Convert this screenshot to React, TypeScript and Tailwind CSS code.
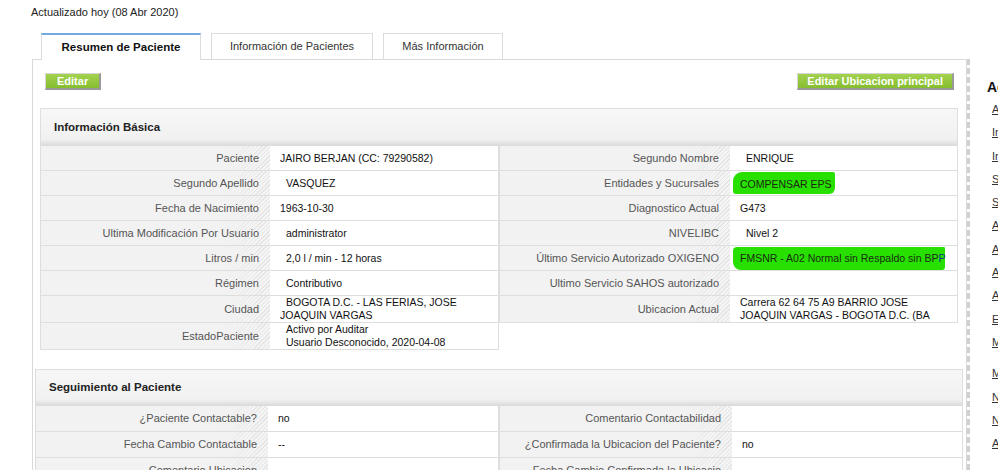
import React from "react";

const LABEL_BG =
  "[background-image:linear-gradient(90deg,#f2f2f2_80%,rgba(242,242,242,0.15)),repeating-linear-gradient(135deg,#e0e0e0_0px,#e0e0e0_1px,#f5f5f5_1px,#f5f5f5_3px)]";

type Row = {
  label: string;
  value?: React.ReactNode;
  indent?: boolean;
  pad?: string;
};

const LEFT: Row[] = [
  { label: "Paciente", value: "JAIRO BERJAN (CC: 79290582)" },
  { label: "Segundo Apellido", value: "VASQUEZ", indent: true },
  { label: "Fecha de Nacimiento", value: "1963-10-30" },
  { label: "Ultima Modificación Por Usuario", value: "administrator", indent: true },
  { label: "Litros / min", value: "2,0 l / min - 12 horas", indent: true },
  { label: "Régimen", value: "Contributivo", indent: true },
  { label: "Ciudad", value: "BOGOTA D.C. - LAS FERIAS, JOSE JOAQUIN VARGAS", indent: true },
  {
    label: "EstadoPaciente",
    pad: "pl-[16px]",
    value: (
      <>
        Activo por Auditar
        <br />
        Usuario Desconocido, 2020-04-08
      </>
    ),
  },
];

const RIGHT: Row[] = [
  { label: "Segundo Nombre", value: "ENRIQUE", indent: true },
  {
    label: "Entidades y Sucursales",
    pad: "pl-[3px]",
    value: (
      <span className="inline-block h-[22px] rounded-tl-[9px] rounded-tr-[2px] rounded-bl-[3px] rounded-br-[6px] bg-[#27e000] pl-[7px] pr-[3px] leading-[24px] text-[#1c2a10]">
        COMPENSAR EPS
      </span>
    ),
  },
  { label: "Diagnostico Actual", value: "G473" },
  { label: "NIVELIBC", value: "Nivel 2", indent: true },
  {
    label: "Último Servicio Autorizado OXIGENO",
    pad: "pl-[3px]",
    value: (
      <span className="inline-block h-[23px] whitespace-nowrap rounded-tl-[4px] rounded-tr-[1px] rounded-bl-[8px] rounded-br-[3px] bg-[#27e000] pl-[7px] leading-[23px] text-[#1c2a10]">
        FMSNR - A02 Normal sin Respaldo sin BP<span className="text-[#123a8c]">P</span>
      </span>
    ),
  },
  { label: "Ultimo Servicio SAHOS autorizado" },
  { label: "Ubicacion Actual", value: "Carrera 62 64 75 A9 BARRIO JOSE JOAQUIN VARGAS - BOGOTA D.C. (BA" },
];

const SEG_LEFT: Row[] = [
  { label: "¿Paciente Contactable?", value: "no" },
  { label: "Fecha Cambio Contactable", value: "--" },
  { label: "Comentario Ubicacion" },
];

const SEG_RIGHT: Row[] = [
  { label: "Comentario Contactabilidad" },
  { label: "¿Confirmada la Ubicacion del Paciente?", value: "no" },
  { label: "Fecha Cambio Confirmada la Ubicacio" },
];

const LINKS_A = [
  "Agregar Nota",
  "Imprimir Ficha",
  "Informe Paciente",
  "Solicitar Servicio",
  "Seguimiento",
  "Asignar Equipo",
  "Autorizar Servicio",
  "Agendar Visita",
  "Adjuntar Archivo",
  "Editar Paciente",
  "Mover Paciente",
];
const LINKS_B = ["Marcar Fallecido", "Nuevo Servicio", "Nueva Novedad", "Anular Paciente"];

function InfoTable({ rows, labelW, rowH }: { rows: Row[]; labelW: string; rowH: string }) {
  return (
    <div className="flex-1 self-start border-x border-[#dedede]">
      {rows.map((r) => (
        <div key={r.label} className={`flex border-b border-[#dedede] ${rowH}`}>
          <div
            className={`flex shrink-0 items-center justify-end pr-[11px] text-right text-[11px] leading-[13px] text-[#555] ${labelW} ${LABEL_BG}`}
          >
            {r.label}
          </div>
          <div
            className={`flex flex-1 items-center overflow-hidden bg-white text-[10.5px] leading-[13px] text-[#111] ${
              r.pad ?? "pl-[10px]"
            }`}
          >
            <div className={r.indent ? "indent-[6px]" : ""}>{r.value}</div>
          </div>
        </div>
      ))}
    </div>
  );
}

function SectionHeader({ title, h }: { title: string; h: string }) {
  return (
    <div
      className={`flex items-center border border-b-0 border-[#dedede] bg-[linear-gradient(to_bottom,#f7f7f7_0%,#f1f1f1_82%,#d9d9d9_100%)] pl-[13px] text-[11.5px] font-bold text-[#222] ${h}`}
    >
      {title}
    </div>
  );
}

function GreenButton({ children, px = "px-[11px]" }: { children: React.ReactNode; px?: string }) {
  return (
    <button
      className={`h-[17px] border-t border-l border-[#d6d6d6] border-r-2 border-b-2 border-r-[#999] border-b-[#999] bg-[linear-gradient(to_bottom,#a3d24f,#86bd2f)] text-[11px] font-bold leading-[14px] text-white ${px}`}
    >
      {children}
    </button>
  );
}

export default function App() {
  return (
    <div className="flex h-[470px] w-[998px] overflow-hidden bg-white font-['Liberation_Sans',Arial,sans-serif]">
      <div className="w-[967px] shrink-0 pl-[32px]">
        <div className="-ml-px pt-[5px] text-[11px] leading-[14px] text-[#222]">Actualizado hoy (08 Abr 2020)</div>

        <div className="mt-[14px] flex h-[26px] items-start gap-[10px] pl-[9px]">
          <div className="relative z-10 flex h-[27px] w-[160px] items-center justify-center border-x border-t-2 border-x-[#dcdcdc] border-t-[#74a9df] bg-white pt-[1px] text-[11.5px] font-bold text-[#111]">
            Resumen de Paciente
          </div>
          <div className="flex h-[26px] w-[162px] items-center justify-center border-x border-t border-[#dcdcdc] bg-white pb-[1px] text-[11px] text-[#333]">
            Información de Pacientes
          </div>
          <div className="flex h-[26px] w-[120px] items-center justify-center border-x border-t border-[#dcdcdc] bg-white pb-[1px] text-[11px] text-[#333]">
            Más Información
          </div>
        </div>

        <div className="h-[420px] border-x border-t border-[#d9d9d9]">
          <div className="flex justify-between pl-[12px] pr-[12px] pt-[13px]">
            <GreenButton>Editar</GreenButton>
            <GreenButton px="px-[9px]">Editar Ubicacion principal</GreenButton>
          </div>

          <div className="ml-[7px] mr-[8px] mt-[18px]">
            <SectionHeader title="Información Básica" h="h-[38px]" />
            <div className="flex">
              <InfoTable rows={LEFT} labelW="w-[229px]" rowH="min-h-[25px]" />
              <InfoTable rows={RIGHT} labelW="w-[230px]" rowH="min-h-[25px]" />
            </div>
          </div>

          <div className="ml-[2px] mr-[3px] mt-[19px]">
            <SectionHeader title="Seguimiento al Paciente" h="h-[37px]" />
            <div className="flex">
              <InfoTable rows={SEG_LEFT} labelW="w-[232px]" rowH="min-h-[26px]" />
              <InfoTable rows={SEG_RIGHT} labelW="w-[232px]" rowH="min-h-[26px]" />
            </div>
          </div>
        </div>
      </div>

      <div className="mt-[59px] flex-1 overflow-hidden whitespace-nowrap border-l-[3px] border-dashed border-[#d0d0d0] pl-[17px] pt-[20px]">
        <div className="text-[14px] font-bold leading-[16px] text-[#111]">Acciones</div>
        <div className="mt-[3px] pl-[5px]">
          {LINKS_A.map((l) => (
            <div key={l} className="h-[23.3px] text-[11px] leading-[23px] text-[#333] underline">
              {l}
            </div>
          ))}
          <div className="mt-[8px]">
            {LINKS_B.map((l) => (
              <div key={l} className="h-[23.3px] text-[11px] leading-[23px] text-[#333] underline">
                {l}
              </div>
            ))}
          </div>
        </div>
      </div>
    </div>
  );
}
